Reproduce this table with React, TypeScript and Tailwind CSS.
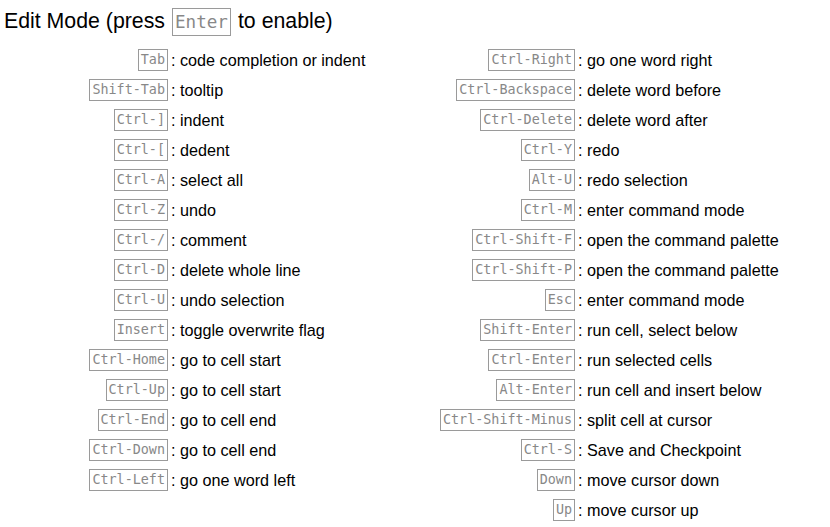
const leftRows: [string, string][] = [
  ['Tab', 'code completion or indent'],
  ['Shift-Tab', 'tooltip'],
  ['Ctrl-]', 'indent'],
  ['Ctrl-[', 'dedent'],
  ['Ctrl-A', 'select all'],
  ['Ctrl-Z', 'undo'],
  ['Ctrl-/', 'comment'],
  ['Ctrl-D', 'delete whole line'],
  ['Ctrl-U', 'undo selection'],
  ['Insert', 'toggle overwrite flag'],
  ['Ctrl-Home', 'go to cell start'],
  ['Ctrl-Up', 'go to cell start'],
  ['Ctrl-End', 'go to cell end'],
  ['Ctrl-Down', 'go to cell end'],
  ['Ctrl-Left', 'go one word left'],
]

const rightRows: [string, string][] = [
  ['Ctrl-Right', 'go one word right'],
  ['Ctrl-Backspace', 'delete word before'],
  ['Ctrl-Delete', 'delete word after'],
  ['Ctrl-Y', 'redo'],
  ['Alt-U', 'redo selection'],
  ['Ctrl-M', 'enter command mode'],
  ['Ctrl-Shift-F', 'open the command palette'],
  ['Ctrl-Shift-P', 'open the command palette'],
  ['Esc', 'enter command mode'],
  ['Shift-Enter', 'run cell, select below'],
  ['Ctrl-Enter', 'run selected cells'],
  ['Alt-Enter', 'run cell and insert below'],
  ['Ctrl-Shift-Minus', 'split cell at cursor'],
  ['Ctrl-S', 'Save and Checkpoint'],
  ['Down', 'move cursor down'],
  ['Up', 'move cursor up'],
]

function Kbd({ children, big = false }: { children: string; big?: boolean }) {
  return (
    <kbd
      className={`inline-block border border-[#9a9a9a] px-[2px] font-['DejaVu_Sans_Mono',monospace] text-[#888] ${
        big ? 'h-[28px] text-[17.6px] leading-[26px]' : 'h-[22px] text-[13.4px] leading-[20px]'
      }`}
    >
      {children}
    </kbd>
  )
}

function ShortcutColumn({ rows }: { rows: [string, string][] }) {
  return (
    <div className="w-[407px]">
      {rows.map(([key, descr]) => (
        <div key={key} className="flex h-[30px] items-center">
          <div className="flex w-[163px] shrink-0 justify-end">
            <Kbd>{key}</Kbd>
          </div>
          <span className="ml-[3px] whitespace-pre">: {descr}</span>
        </div>
      ))}
    </div>
  )
}

export default function App() {
  return (
    <div className="h-[527px] w-[830px] bg-white font-['Liberation_Sans',Arial,sans-serif] text-[16.2px] text-black">
      <h2 className="flex h-[45px] items-center pb-[1px] pl-[4px] text-[21.3px] leading-none">
        <span>Edit Mode (press</span>
        <span className="mx-[7px]">
          <Kbd big>Enter</Kbd>
        </span>
        <span>to enable)</span>
      </h2>
      <div className="flex pl-[5px]">
        <ShortcutColumn rows={leftRows} />
        <ShortcutColumn rows={rightRows} />
      </div>
    </div>
  )
}
